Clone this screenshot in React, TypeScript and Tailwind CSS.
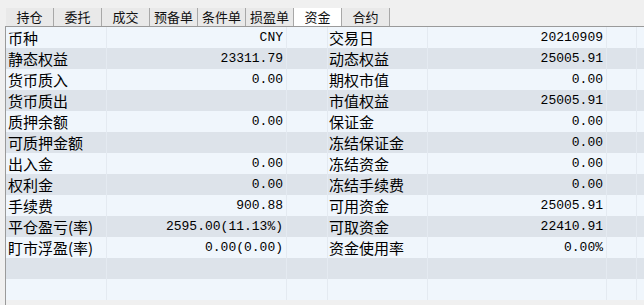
import React from "react";

const tabs = ["持仓", "委托", "成交", "预备单", "条件单", "损盈单", "资金", "合约"];

const rows: [string, string, string, string][] = [
  ["币种", "CNY", "交易日", "20210909"],
  ["静态权益", "23311.79", "动态权益", "25005.91"],
  ["货币质入", "0.00", "期权市值", "0.00"],
  ["货币质出", "", "市值权益", "25005.91"],
  ["质押余额", "0.00", "保证金", "0.00"],
  ["可质押金额", "", "冻结保证金", "0.00"],
  ["出入金", "0.00", "冻结资金", "0.00"],
  ["权利金", "0.00", "冻结手续费", "0.00"],
  ["手续费", "900.88", "可用资金", "25005.91"],
  ["平仓盈亏(率)", "2595.00(11.13%)", "可取资金", "22410.91"],
  ["盯市浮盈(率)", "0.00(0.00)", "资金使用率", "0.00%"],
  ["", "", "", ""],
  ["", "", "", ""],
];

const cjk = { fontFamily: '"Noto Sans CJK SC", "Noto Sans", sans-serif' };
const mono = { fontFamily: '"Liberation Mono", "Noto Sans CJK SC", monospace' };

export default function App() {
  return (
    <div className="w-[644px] h-[305px] bg-[#f0f0f0] overflow-hidden flex flex-col">
      <div className="h-[26px] pt-[8px] pl-[6px] flex shrink-0">
        {tabs.map((t, i) => (
          <div
            key={t}
            className={
              "w-[48px] h-[18px] flex items-center justify-center text-[13px] leading-[18px] text-[#111] border-r border-[#a8a8a8] " +
              (i === 6 ? "bg-white" : "bg-[#e9e9e9]")
            }
            style={cjk}
          >
            {t}
          </div>
        ))}
      </div>
      <div className="ml-[5px] border-l border-t border-[#9a9a9a] flex-1 flex flex-col overflow-hidden">
        {rows.map((r, i) => (
          <div
            key={i}
            className={
              "h-[21px] shrink-0 flex text-black " +
              (i % 2 === 1 ? "bg-[#dde3ea]" : "bg-[#f0f6fc]")
            }
          >
            <div className="w-[101px] border-r border-[#e4eaf1] pl-[2px] text-[15px] leading-[21px] whitespace-nowrap" style={cjk}>
              {r[0]}
            </div>
            <div className="w-[180px] border-r border-[#e4eaf1] pr-[3px] text-right text-[13px] leading-[21px] whitespace-nowrap" style={mono}>
              {r[1]}
            </div>
            <div className="w-[41px] border-r border-[#e4eaf1]" />
            <div className="w-[100px] border-r border-[#e4eaf1] pl-[1px] text-[15px] leading-[21px] whitespace-nowrap overflow-hidden" style={cjk}>
              {r[2]}
            </div>
            <div className="w-[179px] border-r border-[#e4eaf1] pr-[3px] text-right text-[13px] leading-[21px] whitespace-nowrap" style={mono}>
              {r[3]}
            </div>
            <div className="w-[30px] border-r border-[#e4eaf1]" />
            <div className="flex-1" />
          </div>
        ))}
      </div>
    </div>
  );
}
